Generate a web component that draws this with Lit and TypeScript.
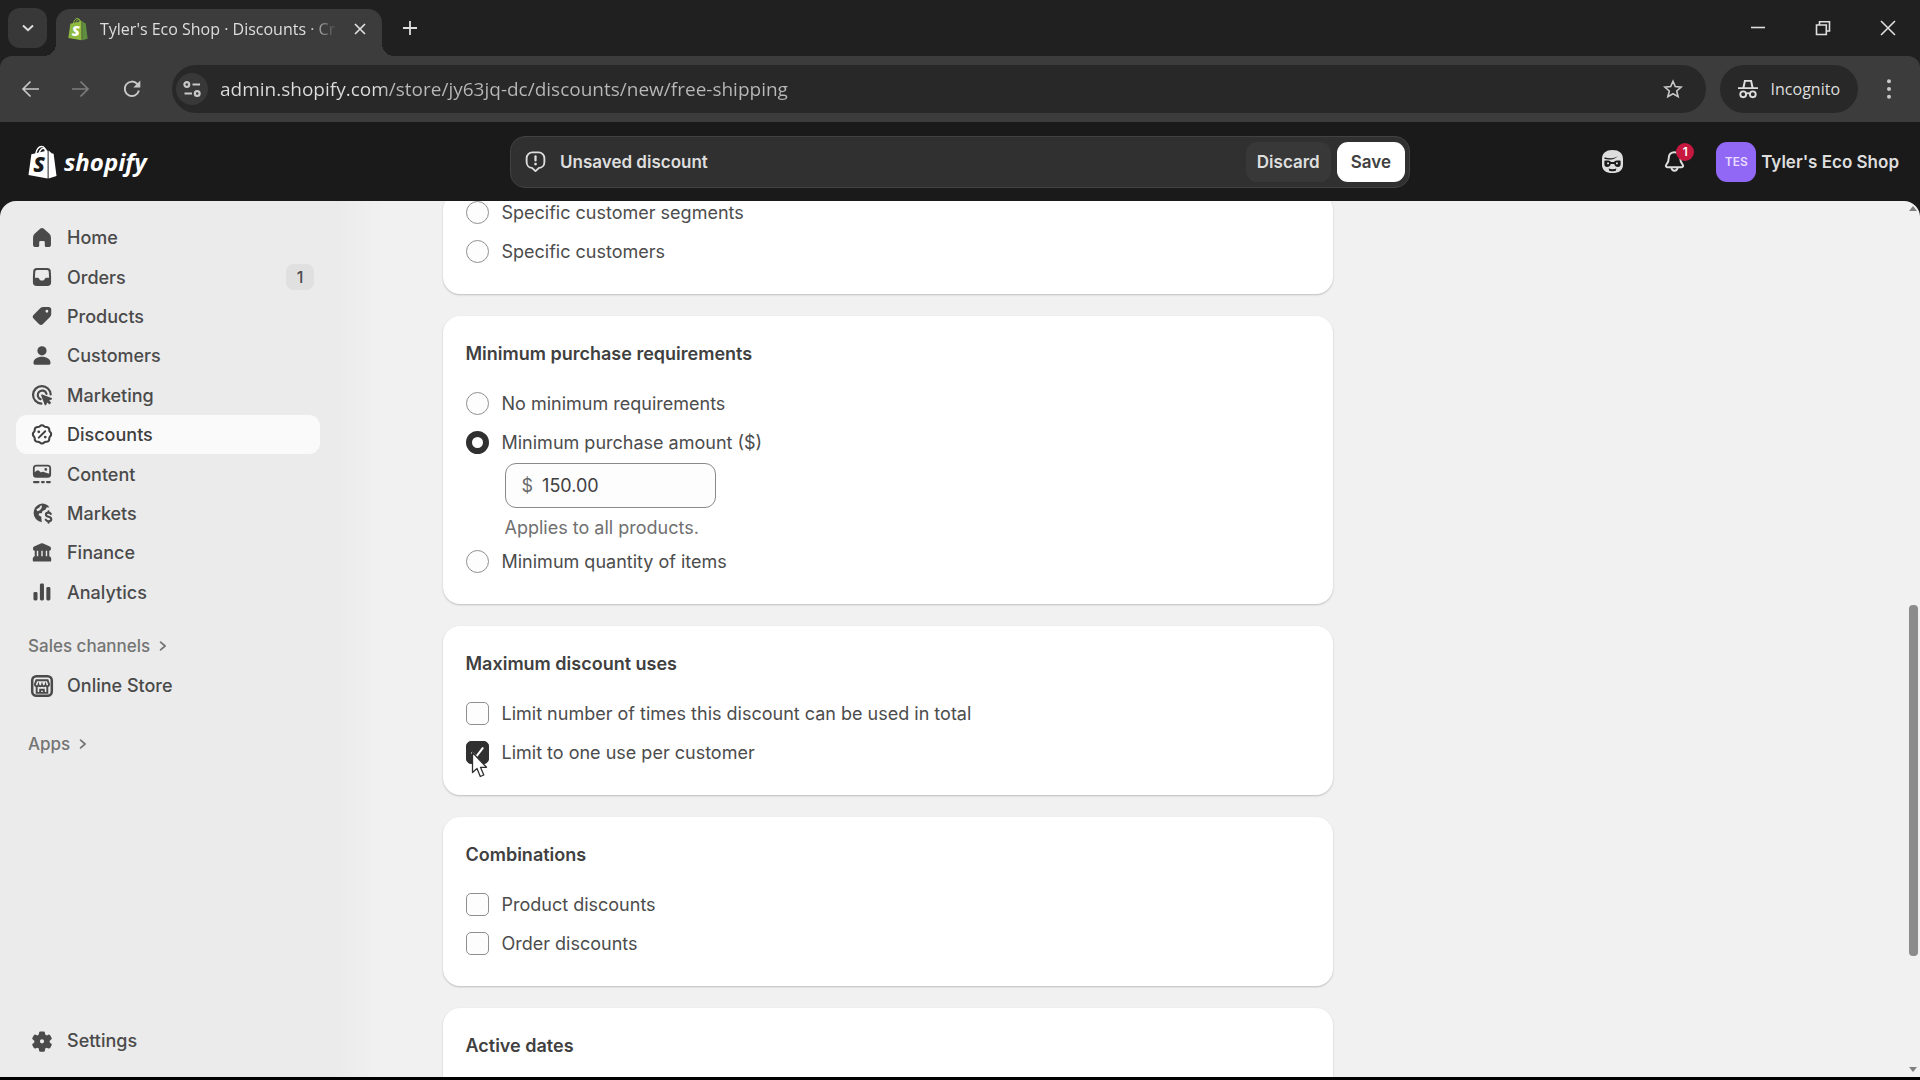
import { LitElement, html, css, svg, nothing, type TemplateResult, type SVGTemplateResult } from "lit";
import { customElement, property, state } from "lit/decorators.js";
import { classMap } from "lit/directives/class-map.js";

/* ---------- icon set (20 x 20 grid) ---------- */

const glyphs: Record<string, SVGTemplateResult> = {
  home: svg`<path fill="currentColor" d="M8.9 3.3a1.7 1.7 0 0 1 2.2 0l4 3.5a3.8 3.8 0 0 1 1.3 2.9v4.9a1.9 1.9 0 0 1-1.9 1.9h-1.6a.9.9 0 0 1-.9-.9v-2.4a1 1 0 0 0-1-1h-2a1 1 0 0 0-1 1v2.4a.9.9 0 0 1-.9.9H5.500a1.900 1.900 0 0 1-1.900-1.900V9.700a3.800 3.800 0 0 1 1.300-2.900z"/>`,
  orders: svg`<path fill="currentColor" fill-rule="evenodd" d="M6.200 3.500h7.600a2.500 2.500 0 0 1 2.450 2l.25 4.700v3.600a2.700 2.700 0 0 1-2.700 2.700H6.200a2.700 2.700 0 0 1-2.700-2.700v-3.600l.25-4.700a2.500 2.500 0 0 1 2.450-2zm.2 1.500a1.200 1.200 0 0 0-1.200 1.100L4.950 10.500h1.900c.5 0 .9.3 1.100.7l.3.6c.2.4.6.7 1.100.7h1.300c.5 0 .9-.3 1.100-.7l.3-.6c.2-.4.6-.7 1.100-.7h1.900l-.25-4.400a1.200 1.200 0 0 0-1.200-1.100z"/>`,
  products: svg`<path fill="currentColor" fill-rule="evenodd" d="M11 3.600h3.600a2 2 0 0 1 2 2v3a3 3 0 0 1-.9 2.100l-5 5a2 2 0 0 1-2.900 0l-3.700-3.700a2 2 0 0 1 0-2.900l4.600-4.600a3.300 3.300 0 0 1 2.300-.9zm2.500 4a1 1 0 1 0 0-2 1 1 0 0 0 0 2z"/>`,
  customers: svg`<circle cx="10" cy="6.300" r="3.300" fill="currentColor"/><path fill="currentColor" d="M3.900 15c0-2.700 2.700-4.400 6.100-4.400s6.100 1.700 6.100 4.400c0 .8-.6 1.300-1.300 1.300H5.200c-.7 0-1.300-.5-1.300-1.300z"/>`,
  marketing: svg`<g fill="none" stroke="currentColor" stroke-width="1.600" stroke-linecap="round"><path d="M9.500 16.200A6.300 6.300 0 1 1 16.200 9.600"/><path d="M9 13a3.200 3.200 0 1 1 4.200-3.900"/></g><path fill="currentColor" d="M10.200 9.600l6.600 2.500c.5.200.5.900 0 1.100l-1.700.8 1.500 1.500-1.300 1.300-1.500-1.500-.8 1.600c-.2.500-.9.500-1.100 0L9.400 10.400c-.2-.5.300-1 .8-.8z"/>`,
  discounts: svg`<path fill="none" stroke="currentColor" stroke-width="1.500" stroke-linejoin="round" d="M8.500 3.700a2 2 0 0 1 3 0 2 2 0 0 0 1.500.6 2 2 0 0 1 2.200 2.100 2 2 0 0 0 .6 1.500 2 2 0 0 1 0 3.100 2 2 0 0 0-.6 1.600 2 2 0 0 1-2.200 2.200 2 2 0 0 0-1.500.6 2 2 0 0 1-3 0 2 2 0 0 0-1.500-.6 2 2 0 0 1-2.200-2.200 2 2 0 0 0-.6-1.600 2 2 0 0 1 0-3.100 2 2 0 0 0 .6-1.500 2 2 0 0 1 2.200-2.100 2 2 0 0 0 1.500-.6z"/><path stroke="currentColor" stroke-width="1.400" stroke-linecap="round" d="M7.700 11.900l4.600-4.600"/><circle cx="7.700" cy="7.700" r="1" fill="currentColor"/><circle cx="12.300" cy="11.500" r="1" fill="currentColor"/>`,
  content: svg`<path fill="currentColor" fill-rule="evenodd" d="M6 3.400h8a2.500 2.500 0 0 1 2.500 2.500v4.200a2.500 2.500 0 0 1-2.500 2.500H6a2.500 2.500 0 0 1-2.500-2.500V5.900A2.500 2.500 0 0 1 6 3.400zm0 1.300c-.7 0-1.200.5-1.200 1.200v2.800l1.300-1a1.500 1.500 0 0 1 1.900.1l1.300 1.200.6-.4a1.500 1.500 0 0 1 1.800.1l3.400 1.200.1-4c0-.7-.5-1.200-1.200-1.200zm6.700 3a1 1 0 1 0 0-2 1 1 0 0 0 0 2z"/><path stroke="currentColor" stroke-width="1.500" stroke-linecap="round" d="M4.300 15.800h3.200M10 15.800h1.300M13.600 15.800h2"/>`,
  markets: svg`<path fill="currentColor" fill-rule="evenodd" d="M10 3.300a6.700 6.700 0 0 1 5.300 2.600l-2.100.1-.8 1.700-2 .8-.6 1.700H8.100l-.6 1.300 2 1.200.3 3.900A6.700 6.700 0 0 1 10 3.300zm0 1.400-1 .1-1.200 1.700L6 7.300l.7 1.400 1.800-.6 1.200-1.600z"/><path fill="none" stroke="currentColor" stroke-width="1.500" stroke-linecap="round" d="M16.300 10.600c-.4-.6-1-.9-1.700-.9-1 0-1.800.6-1.800 1.500 0 2 3.800 1.100 3.800 3.200 0 .9-.8 1.500-1.900 1.500-.8 0-1.600-.4-2-1.100M14.650 8.700v1M14.650 15.900v1"/>`,
  finance: svg`<path fill="currentColor" fill-rule="evenodd" d="M9.100 3.200a2 2 0 0 1 1.800 0l4.700 2.200c.5.200.8.700.8 1.300v.5c0 .7-.5 1.200-1.200 1.200v4c.8.200 1.400.9 1.400 1.800v1.100c0 .4-.3.700-.7.700H4.100a.7.700 0 0 1-.7-.7v-1.100c0-.9.600-1.600 1.400-1.800v-4c-.7 0-1.200-.5-1.200-1.200v-.5c0-.6.3-1.100.8-1.300zM6.300 8.400v3.900h1V8.400zm3.200 0v3.900h1V8.400zm3.200 0v3.900h1V8.400z"/>`,
  analytics: svg`<g fill="currentColor"><rect x="3.900" y="10" width="2.900" height="6" rx="1"/><rect x="8.500" y="4" width="2.900" height="12" rx="1"/><rect x="13.100" y="6.500" width="2.900" height="9.500" rx="1"/></g>`,
  store: svg`<rect x="3" y="3" width="14" height="14" rx="3" fill="none" stroke="currentColor" stroke-width="1.800"/><path fill="none" stroke="currentColor" stroke-width="1.400" d="M6 5.900h8l1 2.800v.6a1.300 1.300 0 0 1-2.500 0 1.300 1.300 0 0 1-2.500 0 1.300 1.300 0 0 1-2.500 0 1.300 1.300 0 0 1-2.500 0v-.6zM6.200 10.700v4.200h7.600v-4.200M8.700 15v-2.300h2.600V15"/>`,
  settings: svg`<path fill="currentColor" fill-rule="evenodd" d="M9 3.200h2c.6 0 1 .4 1.100.9l.2 1.300 1 .6 1.300-.5c.5-.2 1 0 1.300.5l.9 1.600c.3.500.2 1.100-.3 1.400l-1 .8v1.200l1 .8c.5.400.6.900.3 1.400l-.9 1.600c-.3.500-.8.700-1.300.5l-1.300-.5-1 .6-.2 1.300c-.1.500-.5.900-1.100.9H9c-.6 0-1-.4-1.100-.9l-.2-1.300-1-.6-1.300.5c-.5.200-1 0-1.300-.5l-.9-1.600c-.3-.5-.2-1 .3-1.400l1-.8V9.800l-1-.8c-.5-.3-.6-.9-.3-1.400L4.100 6c.3-.5.800-.7 1.300-.5l1.300.5 1-.6.2-1.300c.1-.5.500-.9 1.100-.9zm1 8.500a1.500 1.500 0 1 0 0-3 1.500 1.500 0 0 0 0 3z"/>`,
  chevronRight: svg`<path fill="none" stroke="currentColor" stroke-width="2.400" stroke-linecap="round" stroke-linejoin="round" d="M6.500 4.500l6.500 5.500-6.500 5.500"/>`,
  chevronDown: svg`<path fill="none" stroke="currentColor" stroke-width="2" d="M5 7.500l5 4.700 5-4.700"/>`,
  close: svg`<path fill="none" stroke="currentColor" stroke-width="1.700" d="M5 5l10 10M15 5L5 15"/>`,
  closeWindow: svg`<path fill="none" stroke="currentColor" stroke-width="1.600" d="M3 3l14 14M17 3L3 17"/>`,
  plus: svg`<path fill="none" stroke="currentColor" stroke-width="1.800" d="M10 3v14M3 10h14"/>`,
  back: svg`<path fill="none" stroke="currentColor" stroke-width="1.700" d="M19 10H3M10.500 2.500L3 10l7.500 7.500"/>`,
  forward: svg`<path fill="none" stroke="currentColor" stroke-width="1.700" d="M1 10h16M9.500 2.500L17 10l-7.500 7.500"/>`,
  reload: svg`<path fill="none" stroke="currentColor" stroke-width="1.900" d="M16.900 11.500A7.200 7.200 0 1 1 15.300 5L17 7.500"/><path fill="currentColor" d="M18.300 1.500v7h-7z"/>`,
  tune: svg`<g fill="none" stroke="currentColor" stroke-width="2.200"><circle cx="4.800" cy="5.500" r="2.400"/><path d="M10.500 5.500H18M2.500 14.500H10"/><circle cx="15.200" cy="14.500" r="2.400"/></g>`,
  star: svg`<path fill="none" stroke="currentColor" stroke-width="1.600" d="M10 2.200l2.300 5.400 5.900.5-4.500 3.900 1.400 5.700L10 14.700l-5.100 3 1.400-5.700L1.800 8.100l5.900-.5z"/>`,
  incognito: svg`<path fill="currentColor" fill-rule="evenodd" d="M6.100 1h7.800l1.600 7.200H20v1.800H0V8.200h4.500zM7.700 2.800l-1.100 5.400h6.800l-1.100-5.400z"/><g fill="none" stroke="currentColor" stroke-width="1.900"><circle cx="5.200" cy="15.300" r="2.900"/><circle cx="14.800" cy="15.300" r="2.900"/><path d="M8 14.800c1.200-.8 2.800-.8 4 0"/></g>`,
  dots: svg`<g fill="currentColor"><circle cx="10" cy="2.200" r="2"/><circle cx="10" cy="10" r="2"/><circle cx="10" cy="17.800" r="2"/></g>`,
  minimize: svg`<path stroke="currentColor" stroke-width="1.600" d="M3 9.500h14"/>`,
  restore: svg`<path fill="none" stroke="currentColor" stroke-width="1.600" d="M3.500 7h9.800v9.500H3.500zM6.500 7V3.800h10V13h-3.200"/>`,
  alert: svg`<path fill="none" stroke="currentColor" stroke-width="1.500" stroke-linejoin="round" d="M7.500 2.700h5a4.600 4.600 0 0 1 4.600 4.600v3.200a4.600 4.600 0 0 1-4.300 4.600L10 17.700l-2.800-2.600a4.600 4.600 0 0 1-4.300-4.600V7.300a4.600 4.600 0 0 1 4.600-4.600z"/><path stroke="currentColor" stroke-width="1.800" stroke-linecap="round" d="M10 5.800v3.300"/><circle cx="10" cy="12" r="1.100" fill="currentColor"/>`,
  sidekick: svg`<path fill="currentColor" fill-rule="evenodd" d="M10 .8c5.500 0 8.400 2.700 8.400 7.400v4.300c0 4.300-3.200 6.700-8.400 6.700s-8.400-2.400-8.400-6.700V8.200c0-4.700 2.900-7.400 8.400-7.400zM3.800 6.600c3.200 1.400 8.100.9 10.700-1.300-2.500 3.200-7.400 3.700-11 2.500zM3.500 9.400v2.800c0 1.500.8 2.100 2.200 2.100 1.600 0 2.500-.8 2.900-2.300h2.800c.4 1.500 1.300 2.300 2.900 2.300 1.400 0 2.200-.6 2.200-2.100V9.400c-2.300-.5-4.300-.2-5.300.9H8.800c-1-1.100-3-1.400-5.300-.9zm2.200 1.300h1.500v1.500H5.700zm7.100 0h1.500v1.500h-1.500zM6.900 15.600c2 .8 4.200.8 6.200 0l-.5 1.700c-1.600.6-3.600.6-5.200 0z"/>`,
  bell: svg`<path fill="none" stroke="currentColor" stroke-width="1.600" stroke-linejoin="round" d="M10 2.500c-2.800 0-4.600 2-4.600 4.600 0 2.800-.6 4-1.900 5.400-.8.900-.3 2 .8 2h11.400c1.100 0 1.600-1.100.8-2-1.300-1.400-1.900-2.600-1.900-5.400 0-2.600-1.800-4.600-4.600-4.600z"/><path fill="none" stroke="currentColor" stroke-width="1.600" d="M7.500 14.800a2.500 2.500 0 0 0 5 0"/>`,
};

const icon = (name: string, size = "md"): TemplateResult => html`<svg
  class="icon icon-${size}"
  viewBox="0 0 20 20"
  aria-hidden="true"
>${glyphs[name]}</svg>`;

const shoppingBag = (front: string, side: string, letter: string): TemplateResult => html`<svg
  class="bag"
  viewBox="0 0 30 35"
  aria-hidden="true"
>
  <path d="M8 9C9 4.500 11.500 1.500 14 1.500s4 2.500 4 6M11.500 8.500C12.500 4.500 14.500 3 16.500 3.500s2.500 2 2.500 4" fill="none" stroke=${front} stroke-width="1.500" />
  <path d="M3.500 9.500L20.300 5.500V34.500L0.500 31Z" fill=${front} />
  <path d="M21.300 5.500L24.500 8.500L26.500 9L29.500 32L21.300 34.500Z" fill=${side} />
  <text x="11.500" y="28" text-anchor="middle" font-family="Open Sans, sans-serif" font-size="22" font-weight="800" font-style="italic" fill=${letter}>S</text>
</svg>`;

const iconStyles = css`
  .icon {
    display: block;
    flex: none;
  }
  .icon-xs {
    width: 14px;
    height: 14px;
  }
  .icon-sm {
    width: 20px;
    height: 20px;
  }
  .icon-md {
    width: 28px;
    height: 28px;
  }
  .icon-lg {
    width: 25px;
    height: 25px;
  }
  * {
    box-sizing: border-box;
  }
  button {
    margin: 0;
    padding: 0;
    border: 0;
    background: none;
    color: inherit;
    font: inherit;
  }
`;

/* ---------- browser window frame ---------- */

@customElement("browser-frame")
export class BrowserFrame extends LitElement {
  static styles = [
    iconStyles,
    css`
      :host {
        display: block;
        background: #202020;
        color: #dedede;
        font-family: "Open Sans", "Noto Sans", sans-serif;
      }
      .tabstrip {
        display: flex;
        align-items: center;
        height: 56px;
        padding: 0 8px;
      }
      .tab-search {
        display: grid;
        place-items: center;
        width: 39px;
        height: 40px;
        border-radius: 12px;
        background: #383838;
      }
      .tab {
        position: relative;
        align-self: flex-end;
        display: flex;
        align-items: center;
        gap: 12px;
        width: 326px;
        height: 47px;
        margin-left: 9px;
        padding: 0 12px 8px 12px;
        border-radius: 14px 14px 0 0;
        background: #3c3c3c;
      }
      .tab::before,
      .tab::after {
        content: "";
        position: absolute;
        bottom: 0;
        width: 12px;
        height: 12px;
      }
      .tab::before {
        right: 100%;
        background: radial-gradient(circle at 0 0, transparent 12px, #3c3c3c 12px);
      }
      .tab::after {
        left: 100%;
        background: radial-gradient(circle at 100% 0, transparent 12px, #3c3c3c 12px);
      }
      .bag {
        flex: none;
        width: 20px;
        height: 24px;
      }
      .tab-title {
        flex: 1;
        white-space: nowrap;
        font-size: 16px;
        line-height: 24px;
        mask-image: linear-gradient(to right, #000 208px, transparent 238px);
      }
      .new-tab {
        margin-left: 10px;
        padding: 0 8px;
      }
      .window-controls {
        display: flex;
        gap: 45px;
        margin-left: auto;
        padding-right: 14px;
      }
      .toolbar {
        display: flex;
        align-items: center;
        height: 66px;
        padding: 0 9px 0 8px;
        border-radius: 12px 12px 0 0;
        background: #3c3c3c;
        color: #c8c8c8;
      }
      .nav-buttons {
        display: flex;
        gap: 7px;
      }
      .tool {
        display: grid;
        place-items: center;
        width: 44px;
        height: 44px;
      }
      .tool[disabled] {
        color: #7d7d7d;
      }
      .omnibox {
        flex: 1;
        display: flex;
        align-items: center;
        gap: 12px;
        height: 48px;
        margin: 0 14px 0 18px;
        padding: 0 23px 0 4px;
        border-radius: 24px;
        background: #282828;
      }
      .site-info {
        display: grid;
        place-items: center;
        width: 32px;
        height: 32px;
        border-radius: 50%;
        background: #383838;
      }
      .url {
        flex: 1;
        min-width: 0;
        padding: 0;
        border: 0;
        outline: 0;
        background: linear-gradient(to right, #dedede 165px, #b9b9b9 165px);
        background-clip: text;
        color: #c4c4c4;
        -webkit-text-fill-color: transparent;
        font: 400 19px/28px "Open Sans", "Noto Sans", sans-serif;
      }
      .incognito {
        display: flex;
        align-items: center;
        gap: 13px;
        height: 48px;
        padding: 0 18px;
        border-radius: 24px;
        background: #282828;
        color: #dedede;
        font-size: 16px;
      }
      .menu {
        margin-left: 9px;
      }
    `,
  ];

  render() {
    return html`
      <div class="tabstrip">
        <button class="tab-search" aria-label="Search tabs">${icon("chevronDown", "sm")}</button>
        <div class="tab">
          ${shoppingBag("#8fb93f", "#5e8e3e", "#ffffff")}
          <span class="tab-title">Tyler's Eco Shop · Discounts · Cr</span>
          <button aria-label="Close tab">${icon("close", "sm")}</button>
        </div>
        <button class="new-tab" aria-label="New tab">${icon("plus", "sm")}</button>
        <div class="window-controls">
          <button aria-label="Minimize">${icon("minimize", "sm")}</button>
          <button aria-label="Restore">${icon("restore", "sm")}</button>
          <button aria-label="Close window">${icon("closeWindow", "sm")}</button>
        </div>
      </div>
      <div class="toolbar">
        <div class="nav-buttons">
          <button class="tool" aria-label="Back">${icon("back", "sm")}</button>
          <button class="tool" aria-label="Forward" disabled>${icon("forward", "sm")}</button>
          <button class="tool" aria-label="Reload">${icon("reload", "sm")}</button>
        </div>
        <div class="omnibox">
          <button class="site-info" aria-label="Site information">${icon("tune", "sm")}</button>
          <input
            class="url"
            type="text"
            aria-label="Address"
            spellcheck="false"
            .value=${"admin.shopify.com/store/jy63jq-dc/discounts/new/free-shipping"}
          />
          <button aria-label="Bookmark">${icon("star", "sm")}</button>
        </div>
        <button class="incognito">${icon("incognito", "sm")}Incognito</button>
        <button class="tool menu" aria-label="Menu">${icon("dots", "sm")}</button>
      </div>
    `;
  }
}

/* ---------- admin top bar ---------- */

@customElement("admin-topbar")
export class AdminTopbar extends LitElement {
  static styles = [
    iconStyles,
    css`
      :host {
        display: grid;
        grid-template-columns: 1fr minmax(0, 900px) 1fr;
        align-items: center;
        height: 79px;
        padding: 0 21px;
        background: #1a1a1a;
        color: #dedede;
        font-family: Inter, "Liberation Sans", sans-serif;
        font-size: 17px;
        font-weight: 600;
      }
      .brand {
        display: flex;
        align-items: center;
        gap: 7px;
        padding-left: 7px;
        color: #ffffff;
        font: italic 700 24px/32px "Open Sans", sans-serif;
        text-decoration: none;
      }
      .bag {
        width: 29px;
        height: 34px;
      }
      .savebar {
        display: flex;
        align-items: center;
        height: 52px;
        padding: 0 4px 0 12px;
        border: 1px solid #424242;
        border-radius: 15px;
        background: #303030;
      }
      .message {
        margin: 0 auto 0 12px;
      }
      .discard,
      .save {
        height: 40px;
        padding: 0 11px;
        border-radius: 11px;
      }
      .discard {
        background: #383838;
      }
      .save {
        margin-left: 6px;
        padding: 0 14px;
        background: #ffffff;
        color: #404040;
      }
      .account {
        display: flex;
        align-items: center;
        justify-content: flex-end;
      }
      .notify {
        position: relative;
        margin: 0 29px 0 37px;
      }
      .count {
        position: absolute;
        top: -6px;
        right: -7px;
        width: 18px;
        height: 18px;
        border-radius: 9px;
        background: #c7193f;
        color: #ffffff;
        font-size: 12px;
        line-height: 18px;
      }
      .shop {
        display: flex;
        align-items: center;
        gap: 5px;
        white-space: nowrap;
      }
      .avatar {
        display: grid;
        place-items: center;
        width: 40px;
        height: 40px;
        border-radius: 11px;
        background: #9068f5;
        color: #e9ddff;
        font-size: 12px;
      }
    `,
  ];

  render() {
    return html`
      <a class="brand" href="#home">${shoppingBag("#ffffff", "#ffffff", "#1a1a1a")}<span>shopify</span></a>
      <div class="savebar">
        ${icon("alert", "lg")}
        <span class="message">Unsaved discount</span>
        <button class="discard">Discard</button>
        <button class="save">Save</button>
      </div>
      <div class="account">
        <button aria-label="Sidekick">${icon("sidekick", "lg")}</button>
        <button class="notify" aria-label="Notifications">
          ${icon("bell", "lg")}<span class="count">1</span>
        </button>
        <button class="shop"><span class="avatar">TES</span>Tyler's Eco Shop</button>
      </div>
    `;
  }
}

/* ---------- side navigation ---------- */

interface NavItem {
  label: string;
  icon: string;
  count?: number;
}

const mainNav: NavItem[] = [
  { label: "Home", icon: "home" },
  { label: "Orders", icon: "orders", count: 1 },
  { label: "Products", icon: "products" },
  { label: "Customers", icon: "customers" },
  { label: "Marketing", icon: "marketing" },
  { label: "Discounts", icon: "discounts" },
  { label: "Content", icon: "content" },
  { label: "Markets", icon: "markets" },
  { label: "Finance", icon: "finance" },
  { label: "Analytics", icon: "analytics" },
];

@customElement("side-nav")
export class SideNav extends LitElement {
  @property() current = "Discounts";

  static styles = [
    iconStyles,
    css`
      :host {
        display: flex;
        flex-direction: column;
        padding: 17px 16px;
        background: #ebebeb;
        color: #4a4a4a;
        font-family: Inter, "Liberation Sans", sans-serif;
        font-size: 18px;
        font-weight: 500;
      }
      .list {
        display: grid;
        grid-auto-rows: 1fr;
        height: 394px;
      }
      .item {
        display: flex;
        align-items: center;
        gap: 11px;
        min-height: 39px;
        padding: 0 6px 0 12px;
        border-radius: 11px;
        color: inherit;
        text-decoration: none;
      }
      .current {
        background: #fafafa;
        color: #404040;
      }
      .count {
        width: 28px;
        margin-left: auto;
        border-radius: 8px;
        background: #e0e0e0;
        font-size: 16px;
        line-height: 26px;
        text-align: center;
      }
      .section {
        display: flex;
        align-items: center;
        gap: 6px;
        height: 41px;
        margin-top: 13px;
        padding-left: 12px;
        color: #747474;
        font-size: 17px;
      }
      .item + .section {
        margin-top: 18px;
      }
      .bottom {
        margin-top: auto;
      }
    `,
  ];

  private item(entry: NavItem, extra = "") {
    return html`<a
      class="item ${extra} ${entry.label === this.current ? "current" : ""}"
      href="#${entry.label.toLowerCase().replace(" ", "-")}"
      >${icon(entry.icon)}<span>${entry.label}</span>${entry.count
        ? html`<span class="count">${entry.count}</span>`
        : nothing}</a
    >`;
  }

  render() {
    return html`
      <nav class="list" aria-label="Main">${mainNav.map((entry) => this.item(entry))}</nav>
      <button class="section">Sales channels ${icon("chevronRight", "xs")}</button>
      ${this.item({ label: "Online Store", icon: "store" })}
      <button class="section">Apps ${icon("chevronRight", "xs")}</button>
      ${this.item({ label: "Settings", icon: "settings" }, "bottom")}
    `;
  }
}

/* ---------- discount form ---------- */

@customElement("discount-form")
export class DiscountForm extends LitElement {
  @state() private minimum = "amount";
  @state() private perCustomer = true;

  static styles = [
    iconStyles,
    css`
      :host {
        display: block;
        min-width: 0;
        overflow: hidden;
        background: linear-gradient(to right, #ebebeb, #f1f1f1 48px);
        color: #4c4c4c;
        font-family: Inter, "Liberation Sans", sans-serif;
        font-size: 18px;
      }
      .page {
        display: grid;
        grid-template-columns: 2fr 1fr;
        gap: 22px;
        max-width: 1357px;
        margin: 0 auto;
      }
      .cards {
        display: flex;
        flex-direction: column;
        gap: 22px;
      }
      .card {
        padding: 24px 23px 23px;
        border-radius: 17px;
        background: #ffffff;
        box-shadow: 0 1px 2px rgb(0 0 0 / 22%);
      }
      .scrolled {
        margin-top: -8px;
        padding-top: 0;
      }
      .title {
        margin: 0 0 16px;
        color: #404040;
        font-size: 18px;
        font-weight: 600;
        line-height: 28px;
      }
      .option {
        position: relative;
        display: flex;
        align-items: center;
        gap: 13px;
        width: fit-content;
        height: 39px;
      }
      .control {
        display: grid;
        place-items: center;
        width: 23px;
        height: 23px;
      }
      .control > * {
        grid-area: 1 / 1;
      }
      .choice {
        appearance: none;
        width: 23px;
        height: 23px;
        margin: 0;
        border: 1px solid #8f8f8f;
        border-radius: 5px;
        background: #fdfdfd;
      }
      .round {
        border-radius: 50%;
      }
      .choice:checked {
        border-color: #303030;
        background: #303030;
      }
      .round:checked {
        border-width: 6px;
        background: #ffffff;
      }
      .tick {
        width: 19px;
        height: 19px;
        color: #ffffff;
        z-index: 1;
        pointer-events: none;
      }
      .pointer {
        position: absolute;
        top: 18px;
        left: 5px;
        width: 18px;
        height: 28px;
        z-index: 2;
      }
      .detail {
        padding: 1px 0 0 39px;
      }
      .money {
        display: flex;
        align-items: center;
        gap: 9px;
        width: 211px;
        height: 45px;
        padding: 0 16px;
        border: 1px solid #8a8a8a;
        border-radius: 11px;
        background: #fdfdfd;
        color: #6a6a6a;
      }
      .amount {
        flex: 1;
        width: 100%;
        min-width: 0;
        padding: 0;
        border: 0;
        outline: 0;
        background: none;
        color: #404040;
        font: inherit;
      }
      .help {
        margin: 6px 0 0;
        color: #707070;
        line-height: 28px;
      }
    `,
  ];

  private radio(group: string, value: string, label: string) {
    return html`<label class="option">
      <input
        class="choice round"
        type="radio"
        name=${group}
        .checked=${this.minimum === value}
        @change=${() => (this.minimum = value)}
      />${label}
    </label>`;
  }

  private checkbox(label: string) {
    return html`<label class="option"><input class="choice" type="checkbox" />${label}</label>`;
  }

  render() {
    return html`
      <main class="page">
        <form class="cards">
          <section class="card scrolled">
            ${this.radio("eligibility", "segments", "Specific customer segments")}
            ${this.radio("eligibility", "customers", "Specific customers")}
          </section>

          <section class="card">
            <h2 class="title">Minimum purchase requirements</h2>
            ${this.radio("minimum", "none", "No minimum requirements")}
            ${this.radio("minimum", "amount", "Minimum purchase amount ($)")}
            <div class="detail">
              <label class="money"
                >$<input class="amount" type="text" aria-label="Minimum purchase amount" value="150.00"
              /></label>
              <p class="help">Applies to all products.</p>
            </div>
            ${this.radio("minimum", "quantity", "Minimum quantity of items")}
          </section>

          <section class="card">
            <h2 class="title">Maximum discount uses</h2>
            ${this.checkbox("Limit number of times this discount can be used in total")}
            <label class="option">
              <span class="control">
                <input
                  class="choice"
                  type="checkbox"
                  .checked=${this.perCustomer}
                  @change=${() => (this.perCustomer = !this.perCustomer)}
                />
                ${this.perCustomer
                  ? html`<svg class="tick" viewBox="0 0 20 20" aria-hidden="true">
                      <path d="M4.500 10.500l4 4 7-9" fill="none" stroke="currentColor" stroke-width="2.200" stroke-linecap="round" />
                    </svg>`
                  : nothing}
              </span>
              Limit to one use per customer
              <svg class="pointer" viewBox="0 0 18 28" aria-hidden="true">
                <path
                  d="M1.500 1.500V21.500L6 17.500L9.300 25.500L12.800 24L9.500 16.300H15.500Z"
                  fill="#ffffff"
                  stroke="#303030"
                  stroke-width="1.300"
                  stroke-linejoin="round"
                />
              </svg>
            </label>
          </section>

          <section class="card">
            <h2 class="title">Combinations</h2>
            ${this.checkbox("Product discounts")} ${this.checkbox("Order discounts")}
          </section>

          <section class="card">
            <h2 class="title">Active dates</h2>
          </section>
        </form>
      </main>
    `;
  }
}

/* ---------- page scrollbar ---------- */

@customElement("scroll-track")
export class ScrollTrack extends LitElement {
  @property({ type: Number }) start = 46;
  @property({ type: Number }) size = 41;

  static styles = css`
    :host {
      display: flex;
      flex-direction: column;
      align-items: center;
      padding: 5px 0;
      background: #f1f1f1;
    }
    .arrow {
      border: 4px solid transparent;
    }
    .up {
      border-top-width: 0;
      border-bottom: 5px solid #808080;
    }
    .down {
      border-bottom-width: 0;
      border-top: 5px solid #808080;
    }
    .track {
      flex: 1;
      display: flex;
      flex-direction: column;
      width: 9px;
    }
    .thumb {
      border-radius: 4px;
      background: #8b8b8b;
    }
  `;

  render() {
    const rest = 100 - this.start - this.size;
    return html`
      <span class="arrow up"></span>
      <div class="track">
        <div style="flex: ${this.start}"></div>
        <div class="thumb" style="flex: ${this.size}"></div>
        <div style="flex: ${rest}"></div>
      </div>
      <span class=${classMap({ arrow: true, down: true })}></span>
    `;
  }
}

/* ---------- application ---------- */

@customElement("app-root")
export class AppRoot extends LitElement {
  static styles = css`
    :host {
      display: flex;
      flex-direction: column;
      height: 100vh;
      overflow: hidden;
      border-bottom: 3px solid #000000;
      box-sizing: border-box;
      background: #1a1a1a;
    }
    .body {
      flex: 1;
      display: grid;
      grid-template-columns: 336px minmax(0, 1fr) 14px;
      grid-template-rows: minmax(0, 1fr);
      min-height: 0;
      overflow: hidden;
      border-radius: 16px 16px 0 0;
    }
  `;

  render() {
    return html`
      <browser-frame></browser-frame>
      <admin-topbar></admin-topbar>
      <div class="body">
        <side-nav></side-nav>
        <discount-form></discount-form>
        <scroll-track></scroll-track>
      </div>
    `;
  }
}
